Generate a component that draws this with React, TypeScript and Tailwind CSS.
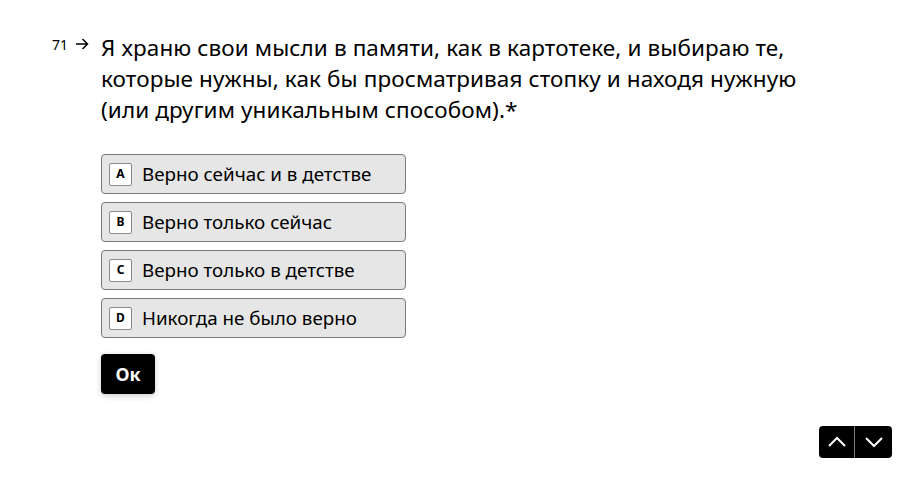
import React from "react";

const options = [
  { k: "A", t: "Верно сейчас и в детстве" },
  { k: "B", t: "Верно только сейчас" },
  { k: "C", t: "Верно только в детстве" },
  { k: "D", t: "Никогда не было верно" },
];

export default function App() {
  return (
    <div
      className="relative w-[922px] h-[489px] bg-white text-black overflow-hidden"
      style={{ fontFamily: '"Noto Sans", "Open Sans", sans-serif' }}
    >
      <div className="flex pt-[32px] pl-[52px]">
        <div className="flex items-start w-[49px] pt-[3px] text-[14px] leading-[20px]">
          <span>71</span>
          <svg width="14" height="14" viewBox="0 0 14 14" className="ml-[7px] mt-[2px]" fill="none" stroke="black" strokeWidth="1.5">
            <path d="M1 7H12.5M7.5 2L12.5 7L7.5 12" />
          </svg>
        </div>
        <div className="flex flex-col">
          <div className="text-[22.5px] leading-[31px] tracking-[0.1px]">
            Я храню свои мысли в памяти, как в картотеке, и выбираю те,
            <br />
            которые нужны, как бы просматривая стопку и находя нужную
            <br />
            (или другим уникальным способом).*
          </div>
          <div className="flex flex-col gap-[8px] mt-[29px]">
            {options.map((o) => (
              <div
                key={o.k}
                className="flex items-center w-[305px] h-[40px] rounded-[4px] border border-[#7a7a7a] bg-[#e6e6e6] pl-[7px]"
              >
                <div className="flex items-center justify-center w-[23px] h-[23px] bg-white border border-[#8a8a8a] rounded-[2px] text-[12px] font-bold leading-none">
                  {o.k}
                </div>
                <span className="ml-[10px] text-[18.8px] leading-none">{o.t}</span>
              </div>
            ))}
          </div>
          <div className="mt-[16px]">
            <button className="w-[54px] h-[40px] rounded-[4px] bg-black text-white text-[18px] font-bold shadow-[0_2px_6px_rgba(0,0,0,0.2)]">
              Ок
            </button>
          </div>
        </div>
      </div>
      <div className="absolute left-[819px] top-[426px] flex h-[32px] rounded-[4px] bg-black overflow-hidden">
        <button className="flex items-center justify-center w-[36px] h-full border-r border-[#7a7a7a]">
          <svg width="20" height="12" viewBox="0 0 20 12" fill="none" stroke="white" strokeWidth="2">
            <path d="M2 10L10 2L18 10" />
          </svg>
        </button>
        <button className="flex items-center justify-center w-[37px] h-full">
          <svg width="20" height="12" viewBox="0 0 20 12" fill="none" stroke="white" strokeWidth="2">
            <path d="M2 2L10 10L18 2" />
          </svg>
        </button>
      </div>
    </div>
  );
}
